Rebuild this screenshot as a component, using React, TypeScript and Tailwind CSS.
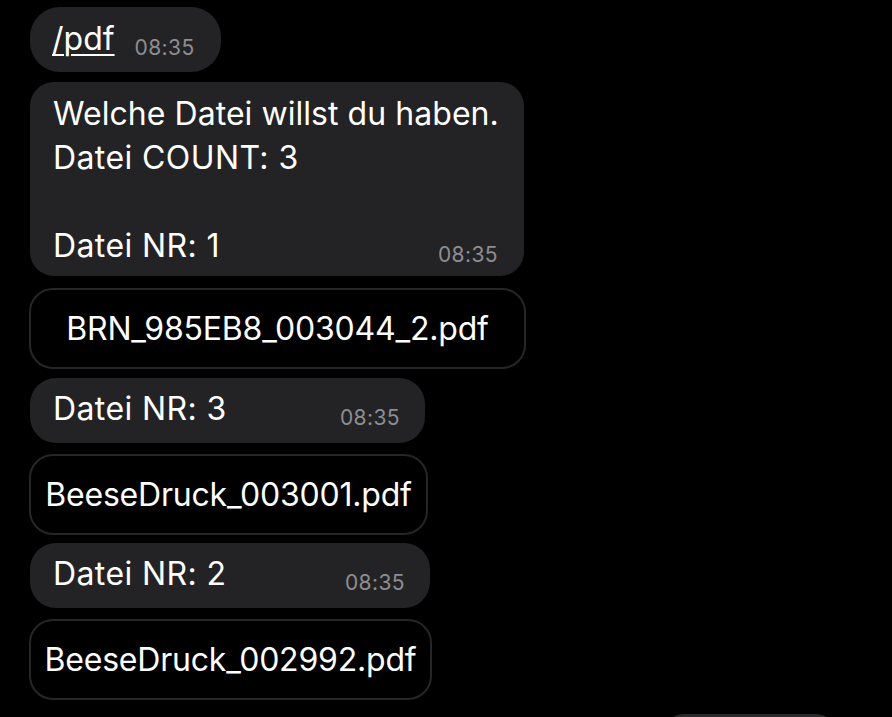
import React from "react";

const font = { fontFamily: "Inter, 'Noto Sans', sans-serif" };

function Time({ className = "" }: { className?: string }) {
  return (
    <span className={`text-[21px] leading-none tracking-[0.4px] text-[#8d8d92] ${className}`}>08:35</span>
  );
}

function FileButton({ name, w }: { name: string; w: string }) {
  return (
    <div
      className={`${w} h-[81px] rounded-[24px] border-2 border-[#262628] flex items-center justify-center text-white text-[32px] tracking-[-0.2px]`}
    >
      {name}
    </div>
  );
}

function NrBubble({ n, w }: { n: string; w: string }) {
  return (
    <div className={`${w} h-[65px] rounded-[26px] bg-[#232325] flex items-start justify-between pl-[23px] pr-[25px] text-white`}>
      <span className="text-[32px] leading-none mt-[15px] tracking-[0.4px]">Datei NR: {n}</span>
      <Time className="mt-[29px]" />
    </div>
  );
}

export default function App() {
  return (
    <div className="w-[892px] h-[717px] bg-black overflow-hidden relative" style={font}>
      <div className="flex flex-col pl-[30px] pt-[7px]">
        <div className="w-[191px] h-[65px] rounded-[30px] bg-[#232325] flex items-start pl-[22px] text-white">
          <span className="text-[32px] leading-none mt-[16px] underline underline-offset-[4px] decoration-[2px]">/pdf</span>
          <Time className="ml-[20px] mt-[30px]" />
        </div>

        <div className="mt-[10px] w-[494px] h-[194px] rounded-[24px] bg-[#232325] pl-[23px] pr-[26px] pt-[10px] text-white flex flex-col">
          <div className="text-[32px] leading-[44px] tracking-[0.4px] whitespace-nowrap">
            <div className="tracking-[0.05px]">Welche Datei willst du haben.</div>
            <div>Datei COUNT: 3</div>
            <div>&nbsp;</div>
            <div>Datei NR: 1</div>
          </div>
          <Time className="self-end -mt-[24px]" />
        </div>

        <div className="mt-[12px] -ml-px">
          <FileButton name="BRN_985EB8_003044_2.pdf" w="w-[497px]" />
        </div>

        <div className="mt-[9px]">
          <NrBubble n="3" w="w-[395px]" />
        </div>

        <div className="mt-[11px] -ml-px">
          <FileButton name="BeeseDruck_003001.pdf" w="w-[399px]" />
        </div>

        <div className="mt-[8px]">
          <NrBubble n="2" w="w-[400px]" />
        </div>

        <div className="mt-[11px] -ml-px">
          <FileButton name="BeeseDruck_002992.pdf" w="w-[403px]" />
        </div>
      </div>
      <div className="absolute left-[664px] top-[714px] w-[172px] h-[40px] rounded-t-[20px] bg-[#2a2a2c]" />
    </div>
  );
}
